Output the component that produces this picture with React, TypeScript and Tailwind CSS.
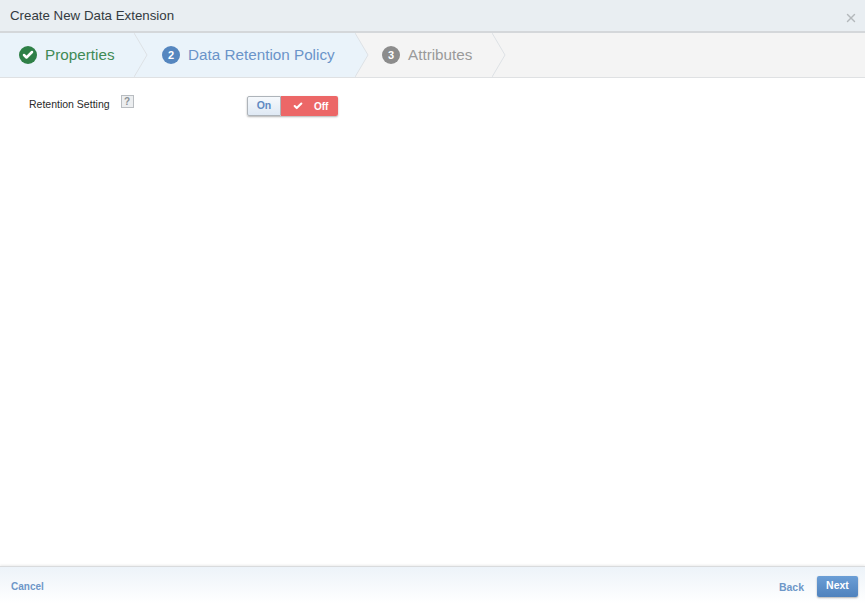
import { Check, X } from 'lucide-react';

const font = { fontFamily: '"Liberation Sans", Arial, sans-serif' };

function Chevron({ fill }: { fill: string }) {
  return (
    <svg className="absolute left-full top-0 z-10" width="15" height="44" viewBox="0 0 15 44">
      <polygon points="0,0 13,22 0,44" fill={fill} />
      <polyline points="0,0 13,22 0,44" fill="none" stroke="#dde1e5" strokeWidth="1" />
    </svg>
  );
}

function Step({
  width,
  bg,
  fill,
  paddingClass,
  children,
}: {
  width: string;
  bg: string;
  fill: string;
  paddingClass: string;
  children: React.ReactNode;
}) {
  return (
    <div className={`relative flex h-full shrink-0 items-center ${width} ${bg} ${paddingClass}`}>
      {children}
      <Chevron fill={fill} />
    </div>
  );
}

export default function App() {
  return (
    <div className="flex h-[603px] w-[865px] flex-col overflow-hidden bg-white" style={font}>
      {/* Title bar */}
      <div className="flex h-[33px] shrink-0 items-center justify-between border-b-2 border-[#d4d7da] bg-[#e9eef2] pl-[10px] pr-[7px]">
        <span className="text-[13.3px] text-[#333a40]">Create New Data Extension</span>
        <X className="mt-[5px] h-[14px] w-[14px] text-[#b4b8bb]" strokeWidth={2.5} />
      </div>

      {/* Steps */}
      <div className="flex h-[45px] shrink-0 border-b border-[#dfe1e3] bg-[#f4f4f4]">
        <Step width="w-[134px]" bg="bg-[#eaf3fa]" fill="#eaf3fa" paddingClass="pl-[19px]">
          <div className="flex h-[18px] w-[18px] items-center justify-center rounded-full bg-[#2f8047]">
            <Check className="h-[12px] w-[12px] text-white" strokeWidth={5} />
          </div>
          <span className="ml-[8px] text-[15.25px] text-[#3f8a55]">Properties</span>
        </Step>
        <Step width="w-[221px]" bg="bg-[#eaf3fa]" fill="#eaf3fa" paddingClass="pl-[28px]">
          <div className="flex h-[18px] w-[18px] items-center justify-center rounded-full bg-[#5586bf] text-[11px] font-bold text-white">
            2
          </div>
          <span className="ml-[8px] text-[15.25px] text-[#6a94c9]">Data Retention Policy</span>
        </Step>
        <Step width="w-[137px]" bg="bg-[#f4f4f4]" fill="#f4f4f4" paddingClass="pl-[27px]">
          <div className="flex h-[18px] w-[18px] items-center justify-center rounded-full bg-[#8c8c8c] text-[11px] font-bold text-white">
            3
          </div>
          <span className="ml-[8px] text-[15.25px] text-[#9a9a9a]">Attributes</span>
        </Step>
      </div>

      {/* Body */}
      <div className="flex-1 bg-white">
        <div className="flex items-start pl-[29px] pt-[17px]">
          <div className="flex w-[218px] items-center">
            <span className="text-[10.5px] leading-[18px] text-[#2a2a2a]">Retention Setting</span>
            <span className="mb-[5px] ml-[11px] flex h-[13px] w-[13px] items-center justify-center border border-[#b9bdc1] bg-[#eceef0] text-[10px] font-bold leading-none text-[#8d9296]">
              ?
            </span>
          </div>
          <div className="mt-px flex h-[20px] w-[91px] rounded-[2px] text-[10.5px] font-bold shadow-[0_1px_2px_rgba(0,0,0,0.3)]">
            <div className="flex w-[34px] items-center justify-center rounded-l-[2px] border border-[#aeb4ba] bg-gradient-to-b from-[#f6f9fc] to-[#dfe9f4] text-[#5f8ac2]">
              On
            </div>
            <div className="flex flex-1 items-center rounded-r-[2px] bg-[#ec6767] pl-[12px] text-white">
              <Check className="h-[10px] w-[10px]" strokeWidth={5} />
              <span className="ml-[11px] text-[10px]">Off</span>
            </div>
          </div>
        </div>
      </div>

      {/* Footer */}
      <div className="flex h-[37px] shrink-0 items-center justify-between border-t border-[#d9dbdd] bg-gradient-to-b from-[#edf3f9] to-white pl-[11px] pr-[7px] shadow-[0_-1px_2px_rgba(0,0,0,0.08)]">
        <span className="mt-[3px] text-[10px] font-bold text-[#6e97c8]">Cancel</span>
        <div className="flex items-center">
          <span className="mt-[6px] text-[10.5px] font-bold text-[#6e97c8]">Back</span>
          <div className="ml-[13px] mt-[2px] flex h-[21px] w-[41px] items-center justify-center rounded-[2px] bg-gradient-to-b from-[#6b9ed6] to-[#4f82bd] text-[10.5px] font-bold text-white shadow-[0_1px_2px_rgba(0,0,0,0.3)]">
            Next
          </div>
        </div>
      </div>
    </div>
  );
}
